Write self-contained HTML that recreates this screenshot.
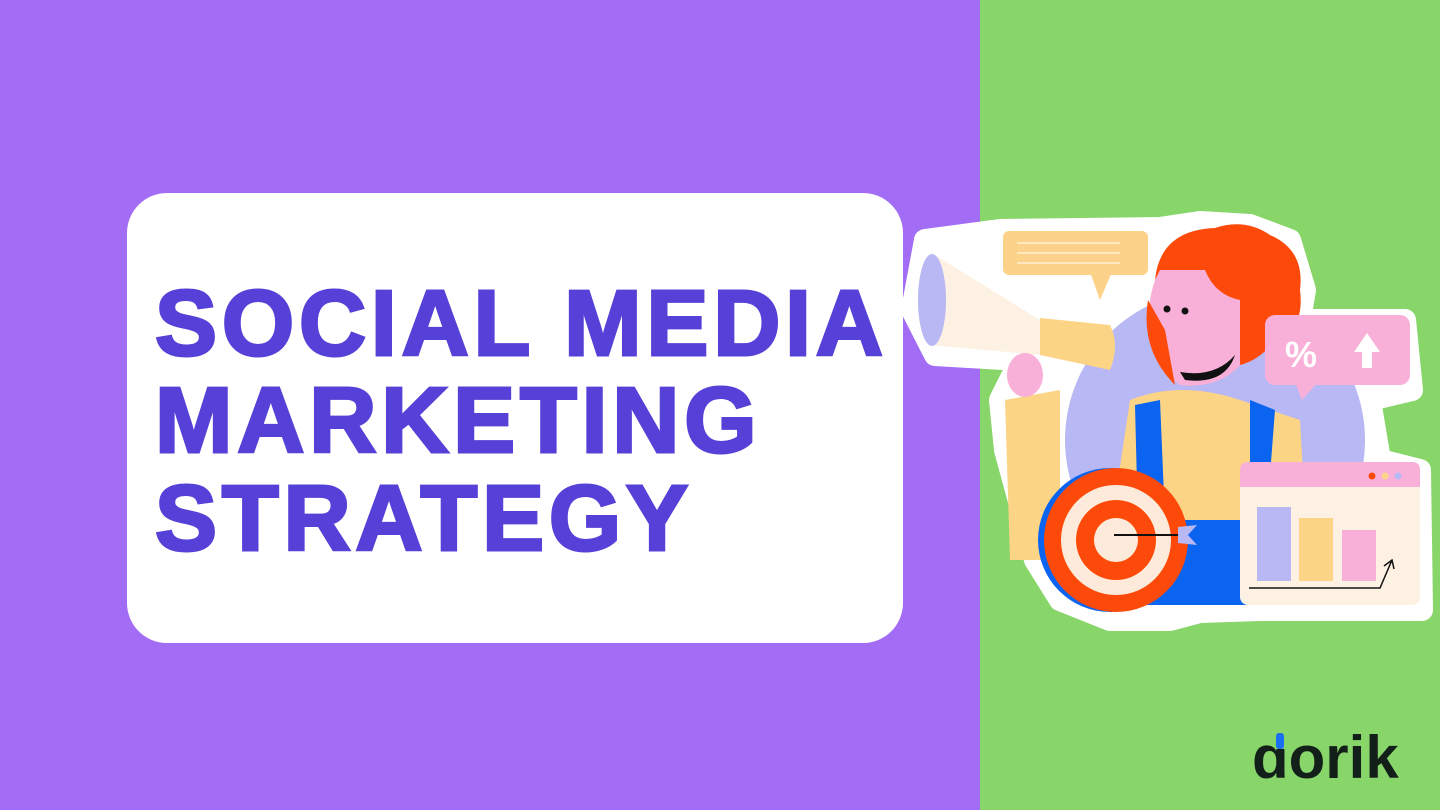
<!DOCTYPE html>
<html><head><meta charset="utf-8"><style>
html,body{margin:0;padding:0}
body{width:1440px;height:810px;position:relative;overflow:hidden;background:#a36cf5;font-family:"Liberation Sans",sans-serif}
.green{position:absolute;left:980px;top:0;width:460px;height:810px;background:#88d56a}
.card{position:absolute;left:127px;top:193px;width:776px;height:450px;background:#fff;border-radius:40px}
.t{position:absolute;left:155px;font-weight:bold;font-size:93px;color:#5641d8;letter-spacing:4.8px;-webkit-text-stroke:3px #5641d8;line-height:1;white-space:nowrap}
.logo{position:absolute;left:1252px;top:723px;font-size:60px;font-weight:bold;color:#13201a;letter-spacing:0px}
</style></head><body>
<div class="green"></div>
<div class="card"></div>
<div class="t" style="top:277px">SOCIAL MEDIA</div>
<div class="t" style="top:374px">MARKETING</div>
<div class="t" style="top:472px">STRATEGY</div>
<svg style="position:absolute;left:0;top:0" width="1440" height="810">
<g stroke="#fff" stroke-width="22" stroke-linejoin="round" fill="#fff">
<path d="M925 240 L1000 230 L1160 228 L1200 222 L1250 225 L1290 240 L1305 290 L1300 320 L1405 320 L1412 390 L1370 400 L1380 460 L1420 470 L1422 610 L1260 610 L1200 612 L1170 620 L1110 620 L1060 600 L1035 560 L1005 450 L1000 400 L1020 360 L935 355 L912 310 Z"/>
</g>
<circle cx="1215" cy="440" r="150" fill="#b8b8f5"/>
<path d="M1130 400 Q1180 380 1240 400 L1300 420 L1310 600 L1100 600 Z" fill="#fcd486"/>
<path d="M1005 400 L1060 390 L1060 560 L1010 560 Z" fill="#fcd486"/>
<path d="M1135 405 L1160 400 L1165 520 L1250 520 L1250 400 L1275 410 L1260 605 L1140 605 Z" fill="#0a64f0"/>
<path d="M1150 300 Q1160 240 1210 245 Q1250 260 1250 300 L1245 360 Q1220 390 1180 385 Q1145 360 1150 300 Z" fill="#f9b0d8"/>
<path d="M1180 372 Q1215 378 1235 355 Q1225 385 1185 380 Z" fill="#111"/>
<path d="M1155 280 Q1160 230 1215 228 Q1245 218 1270 235 Q1305 250 1300 290 Q1305 330 1275 340 Q1260 360 1240 365 L1240 300 Q1215 295 1205 270 Q1180 270 1160 270 Z" fill="#fd4a0a"/>
<path d="M1148 300 Q1140 350 1175 385 L1165 330 Z" fill="#fd4a0a"/>
<circle cx="1167" cy="309" r="3.5" fill="#111"/><circle cx="1185" cy="311" r="3.5" fill="#111"/>
<rect x="1003" y="231" width="145" height="44" rx="6" fill="#fcd28a"/>
<path d="M1090 272 L1100 300 L1112 272 Z" fill="#fcd28a"/>
<g stroke="#fde7bf" stroke-width="2"><line x1="1017" y1="243" x2="1120" y2="243"/><line x1="1017" y1="253" x2="1120" y2="253"/><line x1="1017" y1="263" x2="1120" y2="263"/></g>
<path d="M935 255 L1040 320 L1040 355 L930 345 Z" fill="#fdf1e4"/>
<ellipse cx="932" cy="300" rx="14" ry="46" fill="#b8b8f5"/>
<path d="M1040 318 L1110 325 Q1120 345 1110 370 L1040 355 Z" fill="#fcd486"/>
<ellipse cx="1025" cy="375" rx="18" ry="22" fill="#f9b0d8"/>
<rect x="1265" y="315" width="145" height="70" rx="10" fill="#f9b0d8"/>
<path d="M1295 382 L1302 400 L1318 382 Z" fill="#f9b0d8"/>
<text x="1285" y="367" font-size="36" font-weight="bold" fill="#fff" font-family="Liberation Sans">%</text>
<path d="M1367 333 L1380 352 L1372 352 L1372 368 L1362 368 L1362 352 L1354 352 Z" fill="#fff"/>
<circle cx="1110" cy="540" r="72" fill="#0a64f0"/>
<circle cx="1116" cy="540" r="72" fill="#fd4a0a"/>
<circle cx="1116" cy="540" r="55" fill="#fdeadb"/>
<circle cx="1116" cy="540" r="40" fill="#fd4a0a"/>
<circle cx="1116" cy="540" r="22" fill="#fdeadb"/>
<line x1="1114" y1="535" x2="1183" y2="535" stroke="#111" stroke-width="2"/>
<path d="M1178 527 L1197 525 L1188 535 L1197 545 L1178 543 Z" fill="#b8b8f5"/>
<rect x="1240" y="462" width="180" height="143" rx="8" fill="#fdf1e4"/>
<path d="M1240 470 Q1240 462 1248 462 L1412 462 Q1420 462 1420 470 L1420 487 L1240 487 Z" fill="#f9b0d8"/>
<circle cx="1372" cy="476" r="3.5" fill="#fd4a0a"/><circle cx="1385" cy="476" r="3.5" fill="#fcd486"/><circle cx="1398" cy="476" r="3.5" fill="#b8b8f5"/>
<rect x="1257" y="507" width="34" height="74" fill="#b8b8f5"/>
<rect x="1299" y="518" width="34" height="63" fill="#fcd486"/>
<rect x="1342" y="530" width="34" height="51" fill="#f9b0d8"/>
<path d="M1249 588 L1380 588 L1392 560 M1384 566 L1392 560 L1394 569" stroke="#111" stroke-width="1.5" fill="none"/>
</svg>
<div class="logo">dorik</div>
<svg style="position:absolute;left:0;top:0" width="1440" height="810"><rect x="1275" y="732" width="10" height="17" fill="#88d56a"/><rect x="1276" y="733" width="8" height="16" rx="3" fill="#1a6ef0"/></svg>
</body></html>
